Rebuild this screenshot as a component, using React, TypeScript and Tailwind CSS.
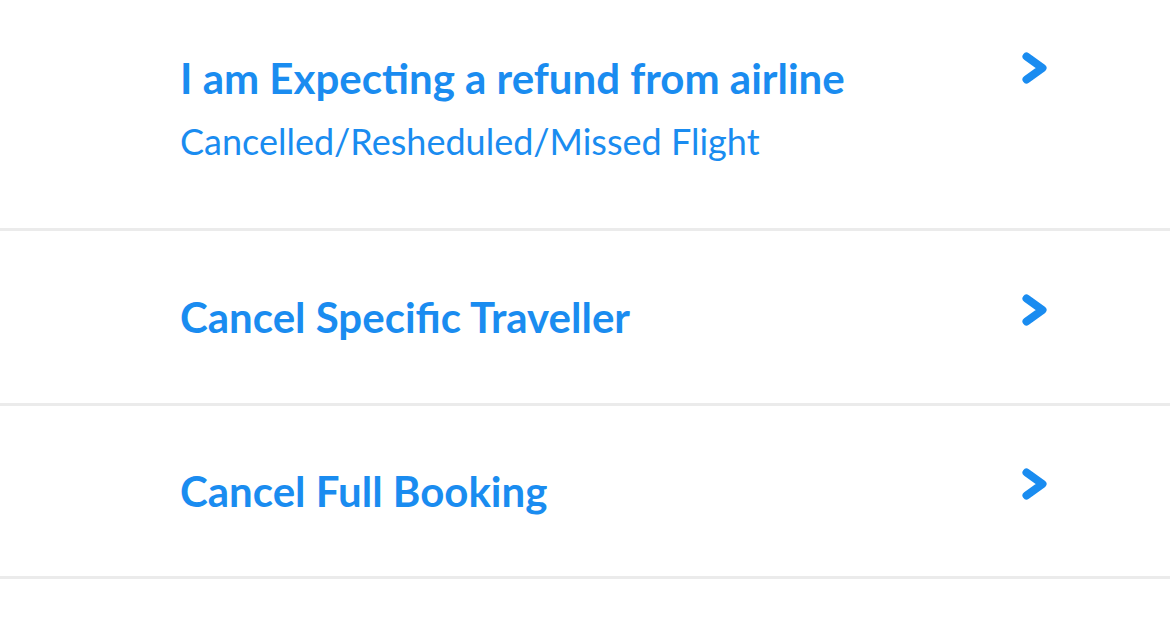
import React from "react";

const Chevron = ({ className = "" }: { className?: string }) => (
  <svg width="25" height="32" viewBox="0 0 25 32" className={"shrink-0 " + className}>
    <polyline points="4.5,4.5 20.5,16 4.5,27.5" fill="none" stroke="#1a8cf0" strokeWidth="8" strokeLinecap="round" strokeLinejoin="round" />
  </svg>
);

export default function App() {
  return (
    <div className="w-[1170px] h-[625px] bg-white overflow-hidden" style={{ fontFamily: "Lato, 'Noto Sans', sans-serif" }}>
      <div className="h-[231px] flex justify-between pl-[180px] pr-[123px] pt-[50px] border-b-[3px] border-[#ebebeb]">
        <div className="flex flex-col">
          <div className="text-[42px] font-bold leading-[56px] text-[#1a8cf0]">I am Expecting a refund from airline</div>
          <div className="text-[36px] leading-[44px] mt-[13px] text-[#1a8cf0]">Cancelled/Resheduled/Missed Flight</div>
        </div>
        <Chevron className="mt-[2px]" />
      </div>
      <div className="h-[175px] flex justify-between items-center pl-[180px] pr-[123px] border-b-[3px] border-[#ebebeb]">
        <div className="text-[42px] font-bold text-[#1a8cf0]">Cancel Specific Traveller</div>
        <Chevron className="mb-[14px]" />
      </div>
      <div className="h-[173px] flex justify-between items-center pl-[180px] pr-[123px] border-b-[3px] border-[#ebebeb]">
        <div className="text-[42px] font-bold text-[#1a8cf0]">Cancel Full Booking</div>
        <Chevron className="mb-[14px]" />
      </div>
    </div>
  );
}
